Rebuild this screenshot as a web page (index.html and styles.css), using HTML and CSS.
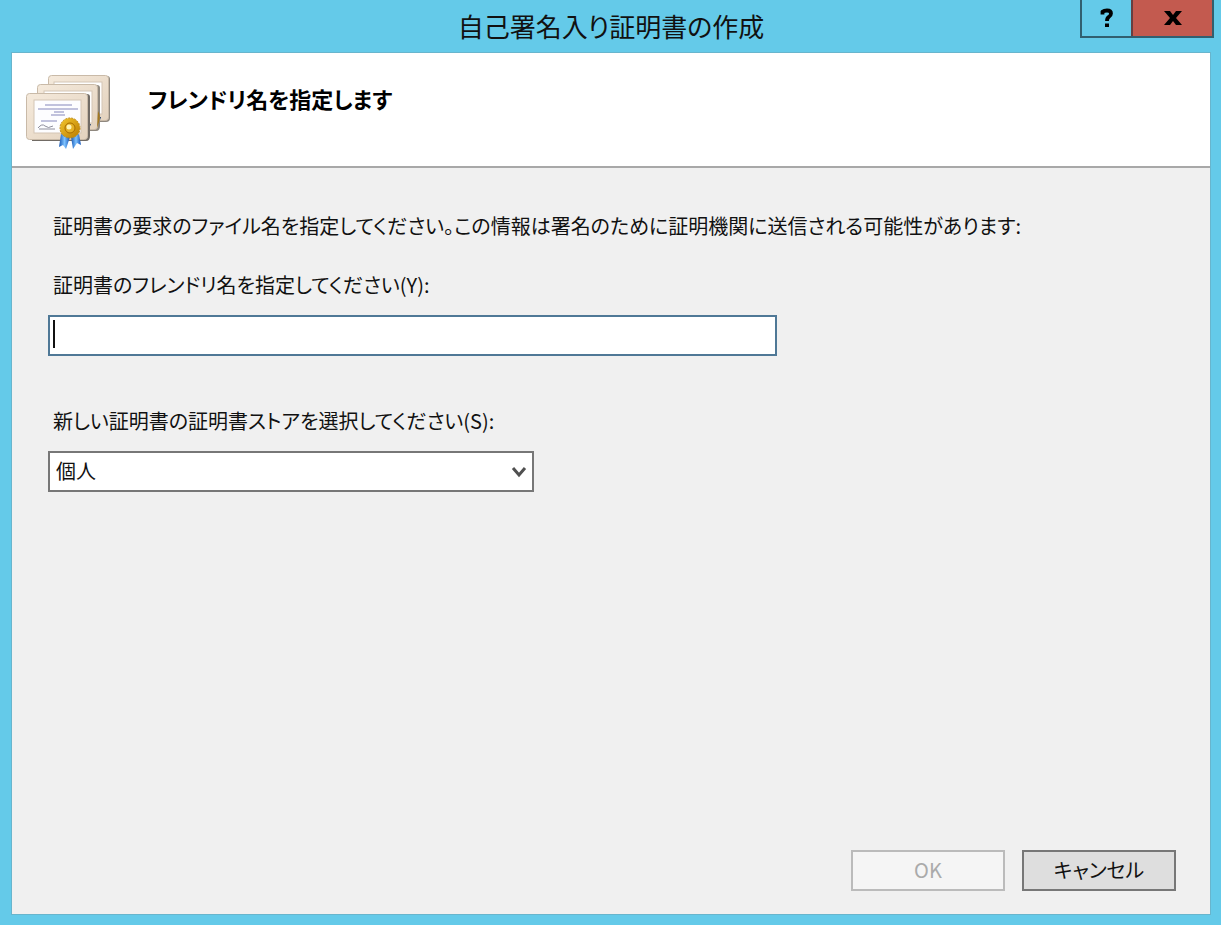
FILE: index.html
```html
<!DOCTYPE html>
<html lang="ja">
<head>
<meta charset="utf-8">
<title>自己署名入り証明書の作成</title>
<link rel="stylesheet" href="styles.css">
</head>
<body>
<main class="window">
  <header class="titlebar">
    <h1 class="window-title">自己署名入り証明書の作成</h1>
    <div class="window-controls">
      <button class="control help" type="button" aria-label="ヘルプ">
        <svg width="16" height="20" viewBox="0 0 16 20" aria-hidden="true"><path d="M3.500 6.500V3.800Q5 2.500 8 2.500Q12 2.500 12 5.600Q12 7.600 9.800 9Q8 10 8 13" fill="none" stroke="#000" stroke-width="3.800"/><rect x="6" y="15.500" width="4" height="3.500" fill="#000"/></svg>
      </button>
      <button class="control close" type="button" aria-label="閉じる">
        <svg width="18" height="16" viewBox="0 0 18 16" aria-hidden="true"><path d="M0 1h6l3 4 3-4h6l-6 7 6 7h-6l-3-4-3 4H0l6-7z" fill="#000"/></svg>
      </button>
    </div>
  </header>
  <form class="dialog">
    <div class="banner">
      <svg class="certificates" width="88" height="80" viewBox="0 0 88 80" aria-hidden="true">
        <defs>
          <linearGradient id="paper" x2="1" y2="1"><stop stop-color="#f5eadc"/><stop offset="1" stop-color="#e3d2be"/></linearGradient>
          <linearGradient id="gold" x2="1" y2="1"><stop stop-color="#f4c72d"/><stop offset="1" stop-color="#b97a00"/></linearGradient>
          <linearGradient id="ribbon" x2="1"><stop stop-color="#1556b4"/><stop offset=".5" stop-color="#7dc2ff"/><stop offset="1" stop-color="#1454b8"/></linearGradient>
        </defs>
        <path d="M26 3h55q3 0 3 3v39q0 4-4 4H26z" fill="#8f887f"/>
        <rect x="22.500" y="2.500" width="60" height="45" rx="3" fill="url(#paper)" stroke="#c9baa8"/>
        <rect x="28" y="9" width="48" height="32" fill="#fff" stroke="#d4c5b5"/>
        <path d="M72 44l3 0-2 6-4-1z" fill="#173d6c"/>
        <path d="M15 12h56q3 0 3 3v38q0 5-4 5H15z" fill="#8f887f"/>
        <rect x="11.500" y="11.500" width="60" height="45" rx="3" fill="url(#paper)" stroke="#c9baa8"/>
        <rect x="18" y="18" width="48" height="32" fill="#fff" stroke="#d4c5b5"/>
        <path d="M72 38q3 5 1 11l-2 6z" fill="#a37820"/>
        <path d="M61 38q4 5 2 13l-2 7-3-2z" fill="#a37820"/>
        <path d="M61 51h4l-3 7-5-1z" fill="#173d6c"/>
        <path d="M4 21h57q3 0 3 3v39q0 5-4 5H6z" fill="#716b65"/>
        <rect x=".500" y="20.500" width="61" height="46" rx="3" fill="url(#paper)" stroke="#c9baa8"/>
        <rect x="8" y="27" width="47" height="33" fill="#fdfdff" stroke="#d4c5b5"/>
        <path d="M19 32h27M12 36h40M28 39h10M25 42h14M15 48h16" fill="none" stroke="#adaed2" stroke-width="1.500"/>
        <path d="M12 55q4-5 7-2t8 0M13 56h16" fill="none" stroke="#8e8e9c"/>
        <path d="M35 61l9 3-4 12-3-4-4 2z" fill="url(#ribbon)"/>
        <path d="M45 64l8-3 2 11-4-2-4 6z" fill="url(#ribbon)"/>
        <circle cx="44" cy="55" r="10" fill="url(#gold)" stroke="#be8a12" stroke-dasharray="2 1"/>
        <circle cx="44" cy="55" r="5" fill="#e5b126" stroke="#a66b00"/>
        <circle cx="43" cy="54" r="2.500" fill="#fff5b7"/>
      </svg>
      <h2 class="banner-title">フレンドリ名を指定します</h2>
    </div>
    <div class="content">
      <p class="description">証明書の要求のファイル名を指定してください。この情報は署名のために証明機関に送信される可能性があります:</p>
      <div class="field name-field">
        <label for="friendly-name">証明書のフレンドリ名を指定してください(Y):</label>
        <div class="input-wrap">
          <input class="text-box" id="friendly-name" type="text" accesskey="y">
          <span class="caret"></span>
        </div>
      </div>
      <div class="field store-field">
        <label for="store">新しい証明書の証明書ストアを選択してください(S):</label>
        <div class="select-wrap">
          <select class="store-select" id="store" accesskey="s"><option>個人</option></select>
          <svg class="chevron" width="16" height="12" viewBox="0 0 16 12" aria-hidden="true"><path d="M2 2l6 7 6-7" fill="none" stroke="#505050" stroke-width="3"/></svg>
        </div>
      </div>
    </div>
    <footer class="actions">
      <button class="action" type="submit" disabled>OK</button>
      <button class="action" type="button">キャンセル</button>
    </footer>
  </form>
</main>
</body>
</html>
```
FILE: styles.css
```css
* { box-sizing: border-box; }
body {
  margin: 0;
  color: #111;
  font-family: "Noto Sans CJK JP", sans-serif;
  font-size: 20px;
  line-height: 28px;
  font-feature-settings: "palt";
}
button, input, select { font: inherit; font-feature-settings: inherit; color: inherit; border-radius: 0; }
h1, h2, p { margin: 0; }
.window {
  min-height: 100vh;
  display: flex;
  flex-direction: column;
  padding: 0 11px 11px 12px;
  background: #64cae9;
}
.titlebar { display: grid; height: 53px; }
.window-title {
  grid-area: 1 / 1;
  align-self: center;
  padding-bottom: 2px;
  text-align: center;
  font-size: 26px;
  line-height: 36px;
  font-weight: 400;
}
.window-controls {
  grid-area: 1 / 1;
  justify-self: end;
  align-self: start;
  display: flex;
  height: 38px;
  margin-right: -4px;
  border: 2px solid #315f70;
  border-top: 0;
}
.control { display: flex; align-items: center; justify-content: center; padding: 0; border: 0; }
.help { width: 49px; background: #64cae9; }
.close { width: 81px; border-left: 2px solid #673f41; background: #c35a4f; }
.dialog { flex: 1; display: flex; flex-direction: column; background: #f0f0f0; box-shadow: 0 0 0 1px #68b5cd; }
.banner {
  display: flex;
  gap: 34px;
  height: 115px;
  padding: 20px 14px;
  background: #fff;
  border-bottom: 2px solid #a8a8a8;
}
.banner-title { padding-top: 10px; color: #000; font-size: 22px; line-height: 30px; font-weight: 700; }
.content { flex: 1; padding: 44px 36px; }
.description { padding-left: 5px; }
.field { display: flex; flex-direction: column; gap: 16px; max-width: 100%; }
.field label { align-self: flex-start; padding-left: 5px; }
.name-field { width: 729px; margin-top: 31px; }
.store-field { width: 486px; margin-top: 51px; }
.input-wrap, .select-wrap { position: relative; display: flex; }
.text-box { flex: 1; min-width: 0; height: 41px; padding: 0 6px; border: 2px solid #4f7896; background: #fff; outline: 0; }
.caret { position: absolute; left: 5px; top: 5px; width: 2px; height: 28px; background: #111; }
.store-select { flex: 1; height: 41px; padding: 0 36px 2px 6px; border: 2px solid #777; background: #fff; appearance: none; }
.chevron { position: absolute; right: 7px; top: 15px; pointer-events: none; }
.actions { display: flex; justify-content: flex-end; gap: 17px; padding: 0 34px 23px; }
.action { width: 154px; height: 41px; padding: 0 0 2px; border: 2px solid #777; background: #dedede; }
.action:disabled { color: #aaa; border-color: #bbb; background: #f5f5f5; }
```
